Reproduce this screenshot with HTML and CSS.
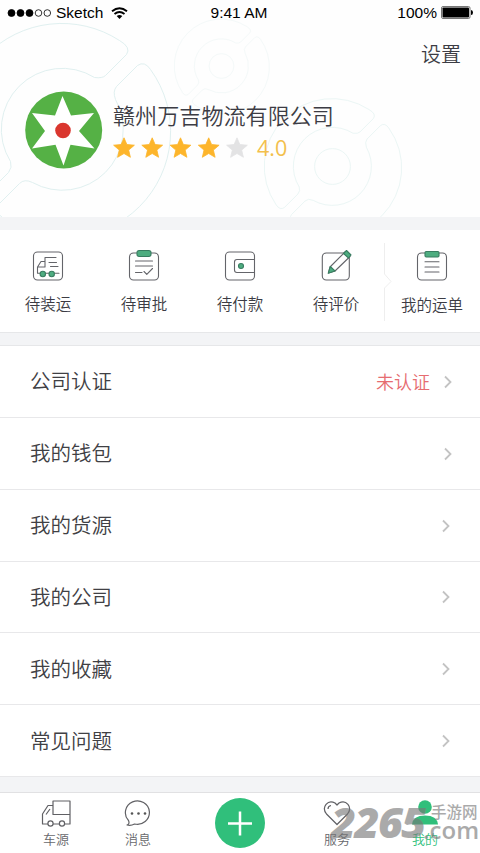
FILE: index.html
```html
<!DOCTYPE html>
<html lang="zh-CN">
<head>
<meta charset="utf-8">
<title>我的</title>
<link rel="stylesheet" href="styles.css">
</head>
<body>
<div class="app">
  <header class="profile">
    <svg class="rings" width="480" height="217" viewBox="0 0 480 217" aria-hidden="true">
      <defs>
        <g id="ring">
          <path vector-effect="non-scaling-stroke" d="M57-89Q69-82 64-75L43-54Q40-51 32-52A61 61 0 0 0-52 32Q-50 38-54 43L-75 64Q-82 69-88 60A106 106 0 0 1 57-89Z"/>
          <path vector-effect="non-scaling-stroke" d="M75-64L54-43Q50-38 53-30A61 61 0 0 1-30 53Q-38 49-43 54L-64 75Q-69 82-60 88A106 106 0 0 0 88-60Q82-69 75-64Z"/>
          <circle vector-effect="non-scaling-stroke" r="28"/>
        </g>
      </defs>
      <use class="ring-a" href="#ring" transform="translate(62.500 129.500)"/>
      <use class="ring-b" href="#ring" transform="translate(221.500 66) scale(.443)"/>
      <use class="ring-c" href="#ring" transform="translate(332.500 166.500) scale(.64)"/>
    </svg>
    <div class="status">
      <div class="carrier">
        <svg width="44" height="10" viewBox="0 0 44 10"><g stroke="#000" stroke-width=".8"><circle cx="4.500" cy="5" r="3.500"/><circle cx="13.500" cy="5" r="3.500"/><circle cx="22.500" cy="5" r="3.500"/><circle cx="31.500" cy="5" r="3.300" fill="none"/><circle cx="40.300" cy="5" r="3.300" fill="none"/></g></svg>
        <span>Sketch</span>
        <svg class="wifi" width="17" height="12" viewBox="0 0 17 12" fill="none" stroke="#000" stroke-width="1.900"><path d="M1 4.200Q8.500-1.900 16 4.200M3.500 7Q8.500 3 13.500 7"/><path d="M5.700 9Q8.500 6.800 11.300 9L8.500 12Z" fill="#000" stroke="none"/></svg>
      </div>
      <span class="time">9:41 AM</span>
      <div class="power">
        <span>100%</span>
        <svg width="33" height="13" viewBox="0 0 33 13"><rect x=".5" y=".5" width="28.500" height="12" rx="1.500" fill="none" stroke="#777"/><rect x="1.500" y="1.500" width="26.500" height="10" rx=".8"/><path d="M30 4q2 0 2 2.500t-2 2.500z"/></svg>
      </div>
    </div>
    <div class="settings">设置</div>
    <div class="company">
      <svg class="logo" width="78" height="78" viewBox="0 0 78 78"><circle cx="38.700" cy="39" r="38.500" fill="#55b145"/><path d="M37.500 5L46 24.500L69 22L54 40L69.500 57.500L45.500 53.800L38.500 74.500L30.500 53.800L7 57.500L20 40L7 22L30 24.500Z" fill="#fff"/><circle cx="38" cy="39.500" r="7.800" fill="#da372f"/></svg>
      <div class="info">
        <div class="name">赣州万吉物流有限公司</div>
        <div class="rating">
          <svg width="136" height="22" viewBox="0 0 136 22">
            <defs><path id="star" d="M11 .8L13.900 7.500L21.400 8.200L15.700 13.100L17.400 20.300L11 16.500L4.600 20.300L6.300 13.100L.6 8.200L8.100 7.500Z" stroke-width=".8" stroke-linejoin="round"/></defs>
            <g fill="#fdb52b" stroke="#fdb52b"><use href="#star"/><use href="#star" x="28.200"/><use href="#star" x="56.500"/><use href="#star" x="84.700"/></g><use href="#star" x="113" fill="#e3e3e4" stroke="#e3e3e4"/>
          </svg>
          <span class="score">4.0</span>
        </div>
      </div>
    </div>
  </header>

  <nav class="orders">
    <div class="order">
      <svg class="oi" viewBox="0 0 34 34"><rect x="2.500" y="3" width="29" height="28" rx="4"/><path d="M6.500 24V18L10 12.500H14V18H7.500M14 17V8.500H25M18 13.500H25.500M19.500 17.500H27M6.500 24.200H28"/><g class="accent"><circle cx="11.800" cy="25" r="2.700"/><circle cx="20.700" cy="25" r="2.700"/></g></svg>
      <span>待装运</span>
    </div>
    <div class="order">
      <svg class="oi" viewBox="0 0 34 34"><rect x="2.500" y="4" width="29" height="27" rx="4"/><rect class="accent" x="10" y="1.500" width="14" height="6" rx="2.200"/><path d="M8.500 12H25.500M8.500 17H25.500M8.500 23.500H15M17 22.500L19.800 25.300L25.500 19.500"/></svg>
      <span>待审批</span>
    </div>
    <div class="order">
      <svg class="oi" viewBox="0 0 34 34"><rect x="2.500" y="3" width="29" height="28" rx="4"/><path d="M31.500 10.500H14Q11.500 10.500 11.500 13V21Q11.500 23.500 14 23.500H31.500"/><circle class="accent" cx="18" cy="17" r="2.500"/></svg>
      <span>待付款</span>
    </div>
    <div class="order">
      <svg class="oi" viewBox="0 0 34 34"><rect x="3.300" y="4" width="27" height="27" rx="4"/><path d="M11 18L26 3L31 7.500L16 22L9.500 24Z" fill="#fff"/><path class="accent" d="M9.200 24.300L11.300 17.500L16 22ZM24.500 4.500L27.500 1.500L32 6L29.500 9Z"/></svg>
      <span>待评价</span>
    </div>
    <svg class="split" width="8" height="78" viewBox="0 0 8 78"><path d="M.5 0V31L7 38.500L.5 45V78"/></svg>
    <div class="order mine">
      <svg class="oi" viewBox="0 0 34 34"><rect x="2.500" y="4" width="29" height="27" rx="4"/><rect class="accent" x="10" y="2.500" width="14" height="5.500" rx="1.200"/><path d="M10 12.800H24M10 18H24M10 23H24"/></svg>
      <span>我的运单</span>
    </div>
  </nav>

  <main class="menu">
    <div class="row"><span>公司认证</span><em>未认证</em><svg class="chev" viewBox="0 0 8 14"><path d="M1 1.500L6.500 7L1 12.500"/></svg></div>
    <div class="row"><span>我的钱包</span><svg class="chev" viewBox="0 0 8 14"><path d="M1 1.500L6.500 7L1 12.500"/></svg></div>
    <div class="row inset"><span>我的货源</span><svg class="chev" viewBox="0 0 8 14"><path d="M1 1.500L6.500 7L1 12.500"/></svg></div>
    <div class="row inset"><span>我的公司</span><svg class="chev" viewBox="0 0 8 14"><path d="M1 1.500L6.500 7L1 12.500"/></svg></div>
    <div class="row inset"><span>我的收藏</span><svg class="chev" viewBox="0 0 8 14"><path d="M1 1.500L6.500 7L1 12.500"/></svg></div>
    <div class="row inset"><span>常见问题</span><svg class="chev" viewBox="0 0 8 14"><path d="M1 1.500L6.500 7L1 12.500"/></svg></div>
  </main>

  <footer class="tabs">
    <div class="tab"><svg class="ti" viewBox="0 0 30 28"><path d="M7 25H1.500V15L7 6.500H12M12 2H29V15.500H12ZM29 15.500V25H23.600M12 25H18.400M5 15.500L9 10"/><circle cx="9.500" cy="24.500" r="2.600"/><circle cx="21" cy="24.500" r="2.600"/></svg><span>车源</span></div>
    <div class="tab"><svg class="ti" viewBox="0 0 30 28"><path d="M5.500 21.500A12 11.700 0 1 1 11.500 25Q8 27 4 26Q7 25 5.500 21.500Z"/><g fill="#555" stroke="none"><circle cx="9" cy="14.500" r="1.300"/><circle cx="15.500" cy="14.500" r="1.300"/><circle cx="22" cy="14.500" r="1.300"/></g></svg><span>消息</span></div>
    <div class="add"><svg width="50" height="50" viewBox="0 0 50 50"><circle cx="25" cy="25" r="25" fill="#30bf7b"/><path d="M13 25.500H37M25 13.500V37.500" stroke="#fff" stroke-width="2.500"/></svg></div>
    <div class="tab"><svg class="ti" viewBox="0 0 30 28"><path d="M15 25.500L4.500 15C-1 8 6 0 13 4L15 6L17 4C24 0 31 8 25.500 15Z"/><path d="M6 10Q6 7 9 6.500"/></svg><span>服务</span></div>
    <div class="tab active"><svg class="ti" viewBox="0 0 30 28"><circle cx="15" cy="8" r="6.800"/><path d="M2 25.500Q3 16.500 15 16.500T28 25.500Z"/></svg><span>我的</span></div>
  </footer>
  <div class="watermark"><b>2265</b><div class="site"><span>手游网</span><strong>.com</strong></div></div>
</div>
</body>
</html>
```
FILE: styles.css
```css
* { box-sizing: border-box; }
body { margin: 0; font-family: "Liberation Sans", "Noto Sans CJK SC", sans-serif; font-weight: 350; color: #3c3c44; }
svg { display: block; flex: none; }
.app { position: relative; width: 480px; height: 853px; background: #f3f4f6; overflow: hidden; display: flex; flex-direction: column; }
.profile { position: relative; height: 217px; background: #fefefe; flex: none; }
.rings { position: absolute; inset: 0; fill: none; }
.ring-a { stroke: #e0f0f0; }
.ring-b { stroke: #f4f9f9; }
.ring-c { stroke: #ebf6f5; }
.status { position: relative; height: 25px; padding: 0 6px 0 7px; display: grid; grid-template-columns: 1fr auto 1fr; align-items: center; color: #000; font-size: 15.500px; font-weight: 400; }
.carrier, .power { display: flex; align-items: center; }
.carrier { gap: 5px; }
.wifi { margin-left: 3px; }
.time { margin-right: 3px; }
.power { justify-content: flex-end; gap: 4px; }
.settings { position: relative; padding: 15px 19px 0 0; text-align: right; font-size: 20px; line-height: 30px; }
.company { position: relative; display: flex; padding: 21px 0 0 25px; }
.info { margin-left: 10px; padding-top: 10px; }
.name { font-size: 22.100px; line-height: 32px; white-space: nowrap; }
.rating { display: flex; align-items: center; height: 30px; gap: 8px; }
.score { font-family: "Open Sans", sans-serif; font-size: 21.500px; font-weight: 400; color: #f3c04c; position: relative; top: -1px; }
.orders { height: 103px; margin-top: 13px; background: #fff; border-bottom: 1px solid #e6e7e9; display: flex; flex: none; }
.order { width: 96px; padding-top: 19px; display: flex; flex-direction: column; align-items: center; gap: 10px; font-size: 15.500px; line-height: 24px; white-space: nowrap; }
.oi { width: 34px; height: 34px; fill: none; stroke: #64656a; stroke-width: 1.100; stroke-linecap: round; stroke-linejoin: round; }
.accent { fill: #4ead80; stroke: #397d61; }
.split { margin: 13px -8px 0 0; fill: none; stroke: #eee; }
.mine { gap: 11px; }
.menu { margin-top: 12px; height: 432px; background: #fff; border-top: 1px solid #e6e7e9; flex: none; display: grid; grid-template-rows: repeat(6, 1fr); }
.row { display: flex; align-items: center; padding: 0 28px 0 30px; border-bottom: 1px solid #e8e8ea; font-size: 20.500px; color: #404044; }
.inset { padding-right: 30px; }
.row span { flex: 1; position: relative; top: -1px; }
.row em { font-style: normal; font-size: 18px; color: #e66c70; margin-right: 14px; }
.chev { width: 8px; height: 14px; margin-top: 1px; fill: none; stroke: #c3c3c3; stroke-width: 1.800; }
.tabs { margin-top: auto; height: 61px; background: #fff; border-top: 1px solid #e1e1e3; display: grid; grid-template-columns: 112px 52px 152px 42px 134px; flex: none; }
.tab { display: flex; flex-direction: column; align-items: center; padding-top: 6px; font-size: 13px; line-height: 20px; color: #68686c; gap: 3px; }
.ti { width: 30px; height: 28px; fill: none; stroke: #606064; stroke-width: 1.200; stroke-linejoin: round; }
.active { color: #30bf7b; }
.active .ti { fill: #30bf7b; stroke: none; }
.add { display: flex; justify-content: center; padding-top: 5px; }
.watermark { position: absolute; left: 331px; top: 803px; display: flex; color: #777; opacity: .62; font-family: "Open Sans", "Noto Sans CJK SC", sans-serif; }
.watermark b { font-size: 43px; line-height: 38px; font-style: italic; font-weight: 800; letter-spacing: -1.500px; width: 100px; }
.site { display: flex; flex-direction: column; }
.site span { font-size: 15.500px; line-height: 19px; font-weight: 500; }
.site strong { font-size: 24px; line-height: 15px; margin-left: -8px; font-weight: 600; }
```
